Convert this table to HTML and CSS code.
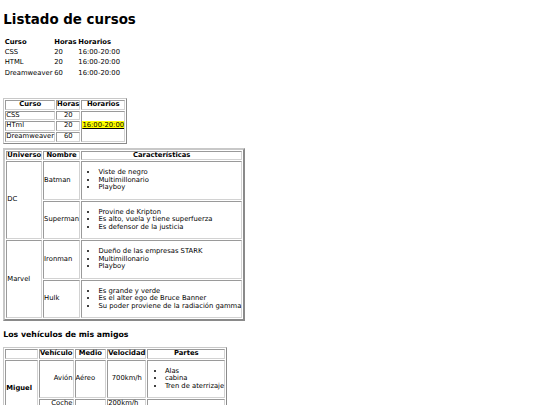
FILE: index.html
```html
<!DOCTYPE html>
<html lang="es">
<head>
<meta charset="utf-8">
<title>Listado de cursos</title>
<link rel="stylesheet" href="styles.css">
</head>
<body>
<h1>Listado de cursos</h1>

<table class="plain">
  <tr><th>Curso</th><th>Horas</th><th>Horarios</th></tr>
  <tr><td>CSS</td><td>20</td><td>16:00-20:00</td></tr>
  <tr><td>HTML</td><td>20</td><td>16:00-20:00</td></tr>
  <tr><td>Dreamweaver</td><td>60</td><td>16:00-20:00</td></tr>
</table>

<table class="grid cursos">
  <tr><th>Curso</th><th>Horas</th><th>Horarios</th></tr>
  <tr><td>CSS</td><td class="c">20</td><td rowspan="3" class="c"><mark><u>16:00-20:00</u></mark></td></tr>
  <tr><td>HTml</td><td class="c">20</td></tr>
  <tr><td>Dreamweaver</td><td class="c">60</td></tr>
</table>

<table class="grid heroes">
  <tr><th>Universo</th><th>Nombre</th><th>Características</th></tr>
  <tr>
    <td rowspan="2">DC</td>
    <td>Batman</td>
    <td><ul><li>Viste de negro</li><li>Multimillonario</li><li>Playboy</li></ul></td>
  </tr>
  <tr>
    <td>Superman</td>
    <td><ul><li>Provine de Kripton</li><li>Es alto, vuela y tiene superfuerza</li><li>Es defensor de la justicia</li></ul></td>
  </tr>
  <tr>
    <td rowspan="2">Marvel</td>
    <td>Ironman</td>
    <td><ul><li>Dueño de las empresas STARK</li><li>Multimillonario</li><li>Playboy</li></ul></td>
  </tr>
  <tr>
    <td>Hulk</td>
    <td><ul><li>Es grande y verde</li><li>Es el alter ego de Bruce Banner</li><li>Su poder proviene de la radiación gamma</li></ul></td>
  </tr>
</table>

<h3>Los vehículos de mis amigos</h3>

<table class="grid vehiculos">
  <tr><th></th><th>Vehículo</th><th>Medio</th><th>Velocidad</th><th>Partes</th></tr>
  <tr>
    <th rowspan="2" class="amigo">Miguel</th>
    <td class="r">Avión</td>
    <td>Aéreo</td>
    <td class="c">700km/h</td>
    <td><ul><li>Alas</li><li>cabina</li><li>Tren de aterrizaje</li></ul></td>
  </tr>
  <tr class="fila-corta">
    <td class="r top">Coche</td>
    <td></td>
    <td class="top">200km/h</td>
    <td></td>
  </tr>
  <tr>
    <th class="amigo">Roberto</th>
    <td class="r">Moto</td>
    <td>Terrestre</td>
    <td class="c">180km/h</td>
    <td><ul><li>Ruedas</li><li>Motor</li><li>Manillar</li></ul></td>
  </tr>
</table>
</body>
</html>
```

FILE: styles.css
```css
html {
  background: #fff;
}

body {
  margin: 3.3px;
  font-family: "DejaVu Sans", Verdana, sans-serif;
  font-size: 6.8px;
  line-height: 8.3px;
  color: #000;
}

h1 {
  font-size: 13.4px;
  line-height: 16px;
  margin: 8.8px 0;
}

h3 {
  font-size: 7.8px;
  line-height: 9.4px;
  margin: 9px 0 7.3px;
}

table {
  border-spacing: 1px;
  font-size: 6.8px;
}

td,
th {
  padding: 0.4px;
}

.plain th {
  text-align: left;
}

.grid {
  border: 1px solid;
  border-color: #c8c8c8 #8a8a8a #8a8a8a #c8c8c8;
}

.grid td,
.grid th {
  border: 1px solid;
  border-color: #9a9a9a #d2d2d2 #d2d2d2 #9a9a9a;
  padding: 0;
  line-height: 7.6px;
}

.cursos {
  margin-top: 20px;
}

.heroes {
  margin-top: 4px;
  border-width: 2px;
}

.fila-corta td {
  height: 17px;
}

.c {
  text-align: center;
}

.r {
  text-align: right;
}

.top {
  vertical-align: top;
}

.amigo {
  text-align: left;
}

mark {
  background: #ffff00;
  color: #000;
}

ul {
  margin: 6.9px 0;
  padding-left: 16.5px;
}
```
